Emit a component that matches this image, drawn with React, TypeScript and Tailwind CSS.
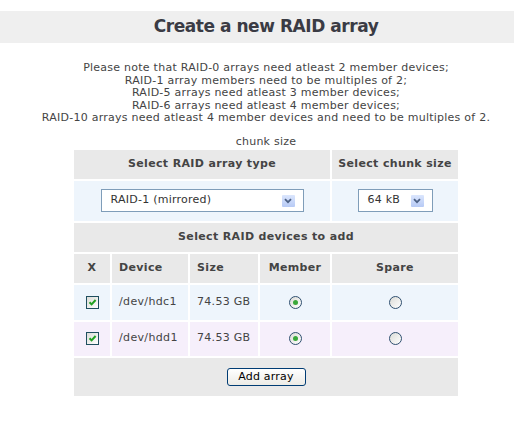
import React from 'react';

const notes = [
  'Please note that RAID-0 arrays need atleast 2 member devices;',
  'RAID-1 array members need to be multiples of 2;',
  'RAID-5 arrays need atleast 3 member devices;',
  'RAID-6 arrays need atleast 4 member devices;',
  'RAID-10 arrays need atleast 4 member devices and need to be multiples of 2.',
];

const devices = [
  { name: '/dev/hdc1', size: '74.53 GB', bg: 'bg-[#eef5fc]', h: 'h-[35px]' },
  { name: '/dev/hdd1', size: '74.53 GB', bg: 'bg-[#f6effb]', h: 'h-[34px]' },
];

const DropButton = () => (
  <span className="flex h-[12px] w-[13px] items-center justify-center rounded-[1px] bg-gradient-to-b from-[#dbe6fd] to-[#b7caf5]">
    <svg width="8" height="6" viewBox="0 0 8 6">
      <path d="M1 1.2 L4 4.2 L7 1.2" fill="none" stroke="#4d6185" strokeWidth="1.8" />
    </svg>
  </span>
);

const Select = ({ value, width }: { value: string; width: string }) => (
  <div className={`mx-auto flex h-[23px] items-center border border-[#7f9db9] bg-white pl-[9px] pr-[8px] ${width}`}>
    <span className="text-[#333]">{value}</span>
    <span className="ml-auto">
      <DropButton />
    </span>
  </div>
);

const Checkbox = () => (
  <span className="mx-auto flex h-[13px] w-[13px] items-center justify-center border border-[#1f4f5f] bg-gradient-to-br from-[#dcdcd7] to-white">
    <svg width="9" height="9" viewBox="0 0 9 9">
      <path d="M1.5 4.2 L3.6 6.4 L7.6 2" fill="none" stroke="#21a121" strokeWidth="2" />
    </svg>
  </span>
);

const Radio = ({ checked }: { checked: boolean }) => (
  <span className="mx-auto flex h-[13px] w-[13px] items-center justify-center rounded-full border border-[#2f4f6f] bg-gradient-to-br from-[#dcdcd7] to-white">
    {checked && <span className="h-[5px] w-[5px] rounded-full bg-[#3aa83a]" />}
  </span>
);

export default function App() {
  return (
    <div className="h-[433px] w-[514px] overflow-hidden bg-white font-['DejaVu_Sans',Verdana,sans-serif] text-[11px] tracking-[0.25px] text-[#444]">
      <div className="w-[532px]">
        <div className="mt-[11px] flex h-[32px] items-center justify-center bg-[#efefef]">
          <h1 className="text-[17px] font-bold tracking-[-0.45px] text-[#3a3b44]">Create a new RAID array</h1>
        </div>

        <div className="mt-[19px] text-center leading-[12.5px]">
          {notes.map((n) => (
            <div key={n}>{n}</div>
          ))}
        </div>

        <table className="mx-auto mt-[11px] table-fixed border-separate border-spacing-[2px] text-center">
          <caption className="leading-[12px]">chunk size</caption>
          <colgroup>
            <col className="w-[36px]" />
            <col className="w-[76px]" />
            <col className="w-[68px]" />
            <col className="w-[70px]" />
            <col className="w-[126px]" />
          </colgroup>
          <tbody>
            <tr className="h-[29px] bg-[#e9e9e9] font-bold tracking-[0.35px]">
              <td colSpan={4}>Select RAID array type</td>
              <td>Select chunk size</td>
            </tr>
            <tr className="h-[40px] bg-[#eef5fc]">
              <td colSpan={4}>
                <Select value="RAID-1 (mirrored)" width="w-[203px]" />
              </td>
              <td>
                <Select value="64 kB" width="w-[75px]" />
              </td>
            </tr>
            <tr className="h-[29px] bg-[#e9e9e9] font-bold tracking-[0.35px]">
              <td colSpan={5}>Select RAID devices to add</td>
            </tr>
            <tr className="h-[29px] bg-[#e9e9e9] font-bold tracking-[0.35px]">
              <td>X</td>
              <td className="pl-[7px] text-left">Device</td>
              <td className="pl-[7px] text-left">Size</td>
              <td>Member</td>
              <td>Spare</td>
            </tr>
            {devices.map((d) => (
              <tr key={d.name} className={`${d.h} ${d.bg}`}>
                <td>
                  <Checkbox />
                </td>
                <td className="pl-[7px] text-left tracking-[0.35px]">{d.name}</td>
                <td className="pl-[7px] text-left tracking-[0.3px]">{d.size}</td>
                <td>
                  <Radio checked />
                </td>
                <td>
                  <Radio checked={false} />
                </td>
              </tr>
            ))}
            <tr className="h-[38px] bg-[#e9e9e9]">
              <td colSpan={5}>
                <button className="h-[18px] w-[79px] rounded-[3px] border border-[#003c74] bg-gradient-to-b from-white to-[#ecebe6] text-[11px] tracking-[0.2px] text-black">
                  Add array
                </button>
              </td>
            </tr>
          </tbody>
        </table>
      </div>
    </div>
  );
}
